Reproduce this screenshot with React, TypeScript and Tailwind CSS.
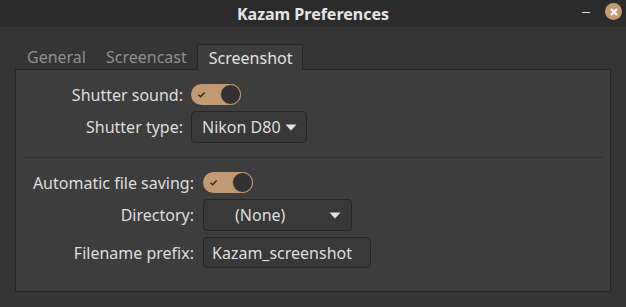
import React from 'react';

const font = { fontFamily: '"Noto Sans", "Open Sans", sans-serif' };

const Toggle: React.FC = () => (
  <div className="relative h-[21px] w-[50px] rounded-full bg-[#c19a72]">
    <svg className="absolute left-[6px] top-[6px]" width="9" height="9" viewBox="0 0 9 9">
      <path d="M1.5 4.8 L3.6 6.8 L7.6 2.4" fill="none" stroke="#2e2e2e" strokeWidth="1.5" />
    </svg>
    <div className="absolute right-0 top-0 h-[21px] w-[21px] rounded-full border border-[#c19a72] bg-[#323232]" />
  </div>
);

const Arrow: React.FC = () => (
  <svg width="12" height="7" viewBox="0 0 12 7">
    <path d="M0.5 0.5 L11.5 0.5 L6 6.5 Z" fill="#e2e2e2" />
  </svg>
);

export default function App() {
  return (
    <div className="flex h-[307px] w-[626px] flex-col bg-[#353535] text-[16px] leading-[20px] text-[#dedede]" style={font}>
      {/* title bar */}
      <div className="relative flex h-[27px] items-center justify-center bg-[#2b2b2b]">
        <span className="font-bold text-[#e4e4e4]">Kazam Preferences</span>
        <div className="absolute right-[4px] top-[3px] flex items-center gap-[15px]">
          <div className="mt-[2px] h-[1.5px] w-[8px] bg-[#e0e0e0]" />
          <div className="flex h-[17px] w-[17px] items-center justify-center rounded-full bg-[#c39a73]">
            <svg width="8" height="8" viewBox="0 0 8 8">
              <path d="M1 1 L7 7 M7 1 L1 7" stroke="#fff" strokeWidth="2" />
            </svg>
          </div>
        </div>
      </div>

      {/* tabs */}
      <div className="mt-[17px] flex h-[25px] items-end pl-[15px]">
        <div className="flex h-[25px] items-center pl-[12px] pr-[10px] text-[#8e8e8e]">General</div>
        <div className="flex h-[25px] items-center pl-[10px] pr-[10px] text-[#8e8e8e]">Screencast</div>
        <div className="relative z-10 -mb-px flex h-[26px] items-center border border-b-0 border-[#262626] bg-[#3d3d3d] pl-[11px] pr-[10px] text-[#e2e2e2]">
          Screenshot
        </div>
      </div>

      {/* notebook page */}
      <div className="mx-[15px] h-[223px] border border-[#262626] bg-[#3d3d3d]">
        <div className="grid grid-cols-[167px_auto] items-center gap-x-[8px] gap-y-[6px] pt-[14px]">
          <div className="text-right">Shutter sound:</div>
          <div><Toggle /></div>
          <div className="text-right">Shutter type:</div>
          <div>
            <div className="flex h-[32px] w-[116px] items-center justify-between rounded-[4px] border border-[#262626] bg-[#383838] pl-[10px] pr-[9px]">
              <span>Nikon D80</span>
              <Arrow />
            </div>
          </div>
        </div>

        <div className="mx-[6px] mt-[14px] h-px bg-[#313131]" />

        <div className="grid grid-cols-[178px_auto] items-center gap-x-[9px] gap-y-[6px] pt-[14px]">
          <div className="text-right">Automatic file saving:</div>
          <div><Toggle /></div>
          <div className="text-right">Directory:</div>
          <div>
            <div className="relative flex h-[32px] w-[149px] items-center rounded-[4px] border border-[#262626] bg-[#383838]">
              <span className="ml-[31px]">(None)</span>
              <div className="absolute right-[10px] top-[12px]"><Arrow /></div>
            </div>
          </div>
          <div className="text-right">Filename prefix:</div>
          <div>
            <div className="flex h-[31px] w-[168px] items-center rounded-[4px] border border-[#262626] bg-[#383838] pl-[8px]">
              Kazam_screenshot
            </div>
          </div>
        </div>
      </div>
    </div>
  );
}
